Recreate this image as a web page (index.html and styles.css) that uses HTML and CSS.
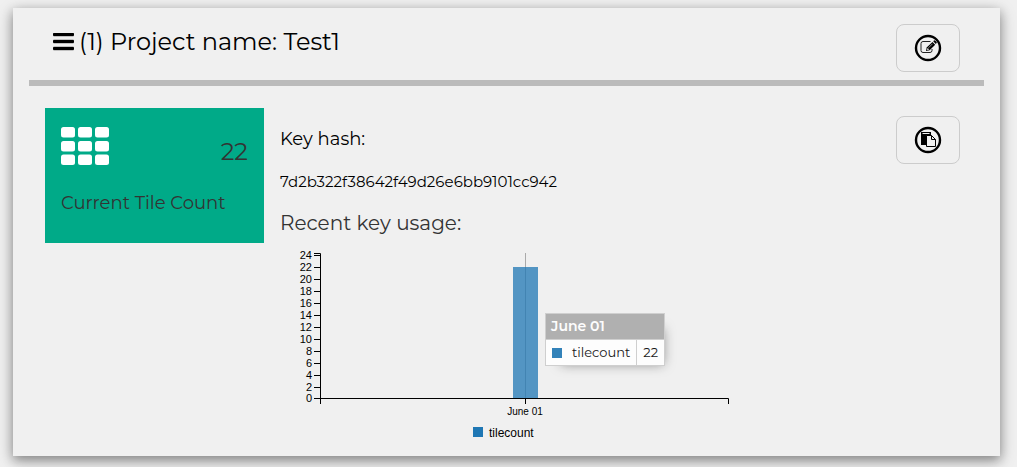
FILE: index.html
```html
<!DOCTYPE html>
<html lang="en">
<head>
<meta charset="utf-8">
<title>Project keys</title>
<link rel="stylesheet" href="styles.css">
</head>
<body>
<main class="card">
  <header class="card-header">
    <h1 class="project-name">
      <svg class="bars" viewBox="0 0 21 18" aria-hidden="true"><path d="M1 0h19q1 0 1 1v1q0 1-1 1H1Q0 3 0 2V1Q0 0 1 0zM1 7h19q1 0 1 1v1q0 1-1 1H1Q0 10 0 9V8Q0 7 1 7zM1 14h19q1 0 1 1v1q0 1-1 1H1q-1 0-1-1v-1q0-1 1-1z" stroke="#000" stroke-width=".4"/></svg>
      <span>(1) Project name: Test1</span>
    </h1>
    <button class="icon-button" type="button" aria-label="Edit project">
      <svg class="icon" viewBox="0 0 28 28" aria-hidden="true">
        <circle cx="14" cy="14" r="12" fill="none" stroke="#000" stroke-width="2.400"/>
        <path d="M16.500 7.500H9Q7 7.500 7 9.500V16.500Q7 18.500 9 18.500H16Q18 18.500 18 16.500V15" fill="none" stroke="#222"/>
        <path d="M12 17l.7-3.500L18.500 8l2.700 2.700-5.600 5.600z"/>
        <path d="M19.200 7.300l.8-.8q.6-.4 1.100.1l1.500 1.500q.5.500 0 1l-.8.900z"/>
        <path d="M14.500 13.800l4-4M13.200 15.800l.6-1.400 1 1z" fill="#eee" stroke="#eee" stroke-width=".6"/>
      </svg>
    </button>
  </header>
  <section class="card-body">
    <div class="tile">
      <div class="tile-top">
        <svg class="tile-icon" viewBox="0 0 48 38" fill="#fff" aria-hidden="true">
          <rect width="14" height="10.500" rx="2.500"/><rect x="17" width="14" height="10.500" rx="2.500"/><rect x="34" width="14" height="10.500" rx="2.500"/>
          <rect y="14" width="14" height="10.500" rx="2.500"/><rect x="17" y="14" width="14" height="10.500" rx="2.500"/><rect x="34" y="14" width="14" height="10.500" rx="2.500"/>
          <rect y="27.500" width="14" height="10.500" rx="2.500"/><rect x="17" y="27.500" width="14" height="10.500" rx="2.500"/><rect x="34" y="27.500" width="14" height="10.500" rx="2.500"/>
        </svg>
        <span class="tile-value">22</span>
      </div>
      <h2 class="tile-label">Current Tile Count</h2>
    </div>
    <div class="details">
      <h2 class="key-title">Key hash:</h2>
      <p class="key-hash">7d2b322f38642f49d26e6bb9101cc942</p>
      <h2 class="usage-title">Recent key usage:</h2>
      <div class="chart">
        <svg class="plot" width="460" height="192" viewBox="0 0 460 192" role="img" aria-label="Tile count on June 01: 22">
          <path class="focus-line" d="M245.500 5V150"/>
          <rect class="bar" x="233" y="19" width="25" height="131"/>
          <path class="axis" d="M34 5.500H40.500V156M34 150.500H448.500V156M245.500 150V156M34 7.500h6M34 19.500h6M34 31.500h6M34 43.500h6M34 55.500h6M34 67.500h6M34 79.500h6M34 91.500h6M34 103.500h6M34 115.500h6M34 127.500h6M34 139.500h6"/>
          <g class="y-labels">
            <text x="32" y="11">24</text><text x="32" y="23">22</text><text x="32" y="35">20</text><text x="32" y="47">18</text><text x="32" y="59">16</text><text x="32" y="71">14</text><text x="32" y="83">12</text><text x="32" y="95">10</text><text x="32" y="107">8</text><text x="32" y="119">6</text><text x="32" y="131">4</text><text x="32" y="143">2</text><text x="32" y="154">0</text>
          </g>
          <text class="x-label" x="245" y="167">June 01</text>
          <rect class="legend-mark" x="193" y="179" width="10" height="10"/>
          <text class="legend-label" x="209" y="189">tilecount</text>
        </svg>
        <table class="tooltip">
          <thead><tr><th colspan="2">June 01</th></tr></thead>
          <tbody><tr><td class="series"><span class="series-row"><span class="swatch"></span>tilecount</span></td><td class="amount">22</td></tr></tbody>
        </table>
      </div>
    </div>
    <button class="icon-button" type="button" aria-label="Copy key hash">
      <svg class="icon" viewBox="0 0 28 28" aria-hidden="true">
        <circle cx="14" cy="14" r="12" fill="none" stroke="#000" stroke-width="2.400"/>
        <path d="M7 6h10v4h-5v9H7z"/>
        <path d="M8.500 7.500h7" stroke="#eee"/>
        <path d="M12.500 9.500h5l4 4v7h-9z" fill="#f0f0f0" stroke="#000"/>
        <path d="M17.500 9.500v4h4" fill="none" stroke="#000"/>
      </svg>
    </button>
  </section>
</main>
</body>
</html>
```
FILE: styles.css
```css
* { box-sizing: border-box; }
body {
  margin: 0;
  padding: 8px 17px 11px 13px;
  background: #f0f0f0;
  color: #000;
  font-family: Montserrat, Inter, sans-serif;
}
h1, h2, p { margin: 0; font-weight: 400; }
.card {
  padding: 16px;
  background: #f0f0f0;
  box-shadow: 0 4px 10px rgba(0, 0, 0, .3), 0 4px 16px rgba(0, 0, 0, .24);
}
.card-header {
  display: flex;
  justify-content: space-between;
  align-items: flex-start;
  padding: 0 24px 8px;
  border-bottom: 6px solid #bbb;
}
.project-name {
  display: flex;
  align-items: center;
  gap: 5px;
  font-size: 24px;
  line-height: 36px;
}
.bars { width: 21px; height: 18px; }
.icon-button {
  flex: none;
  display: flex;
  align-items: center;
  justify-content: center;
  width: 64px;
  height: 48px;
  padding: 0;
  border: 1px solid #ccc;
  border-radius: 8px;
  background: transparent;
}
.icon { width: 28px; height: 28px; }
.card-body {
  display: flex;
  align-items: flex-start;
  padding: 22px 24px 0 16px;
}
.card-body > .icon-button { margin-top: 8px; }
.tile {
  flex: none;
  width: 219px;
  padding: 16px;
  background: #00aa88;
  color: #333;
}
.tile-top { display: flex; justify-content: space-between; }
.tile-icon { width: 48px; height: 38px; margin-top: 3px; }
.tile-value { padding-top: 10px; font-size: 24px; line-height: 36px; }
.tile-label { padding: 20px 0 10px; font-size: 18px; line-height: 27px; }
.details { flex: 1; min-width: 0; padding: 18px 16px 0; }
.key-title { font-size: 18px; line-height: 27px; }
.key-hash { padding-top: 17px; font-size: 15px; line-height: 24px; }
.usage-title { padding-top: 14px; color: #333; font-size: 20px; line-height: 30px; }
.chart { position: relative; padding-top: 10px; }
.plot { display: block; font-family: "Liberation Sans", sans-serif; font-size: 10px; }
.axis { fill: none; stroke: #000; }
.focus-line { stroke: #aaa; }
.bar { fill: #1f77b4; opacity: .75; }
.y-labels { font-size: 11px; text-anchor: end; }
.x-label { text-anchor: middle; }
.legend-mark { fill: #1f77b4; }
.legend-label { font-size: 12px; }
.tooltip {
  position: absolute;
  top: 75px;
  left: 265px;
  width: 120px;
  border-collapse: collapse;
  background: #fff;
  box-shadow: 7px 7px 12px -9px #777;
  opacity: .9;
}
.tooltip th {
  padding: 2px 5px;
  border: 1px solid #ccc;
  background: #aaa;
  color: #fff;
  font-size: 14px;
  font-weight: 600;
  line-height: 21px;
  text-align: left;
}
.tooltip td { border: 1px solid #ccc; padding: 3px 6px; font-size: 13px; line-height: 19px; }
.tooltip .amount { border-left: 1px dotted #999; text-align: right; }
.series-row { display: flex; align-items: center; gap: 10px; }
.swatch { width: 10px; height: 10px; background: #1f77b4; }
```
